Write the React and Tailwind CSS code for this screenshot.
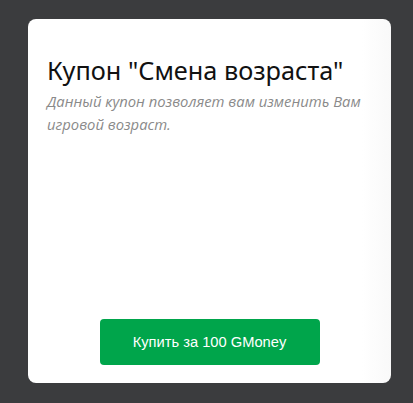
import React from 'react';

const App = () => {
  return (
    <div className="w-[413px] h-[403px] bg-[#3b3c3e] pt-[19px] pl-[28px]">
      <div className="w-[363px] h-[364px] rounded-lg bg-gradient-to-r from-white from-[92%] to-[#f9f9f9] flex flex-col px-[19px] pb-[18px]">
        <h2 className="mt-[33px] text-[25.3px] leading-[36px] text-[#111] font-['Noto_Sans',sans-serif]">
          Купон "Смена возраста"
        </h2>
        <p className="mt-[2px] text-[14.8px] leading-[23px] italic text-[#8a8a8a] font-['Open_Sans',sans-serif]">
          Данный купон позволяет вам изменить Вам игровой возраст.
        </p>
        <div className="mt-auto flex justify-center">
          <button className="w-[220px] h-[46px] rounded bg-[#00a54b] text-white text-[14.7px] font-['Liberation_Sans',sans-serif]">
            Купить за 100 GMoney
          </button>
        </div>
      </div>
    </div>
  );
};

export default App;
